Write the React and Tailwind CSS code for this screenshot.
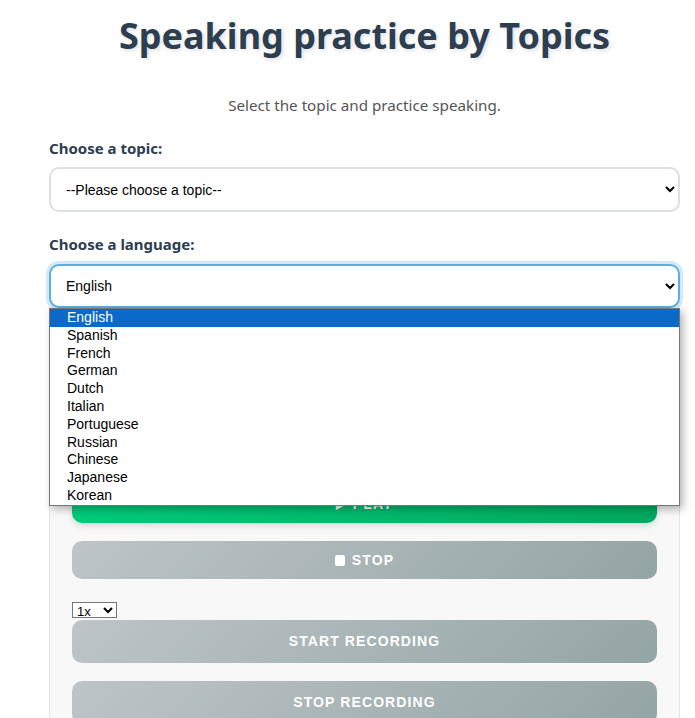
import { useState } from 'react';

const LANGUAGES = ['English', 'Spanish', 'French', 'German', 'Dutch', 'Italian', 'Portuguese', 'Russian', 'Chinese', 'Japanese', 'Korean'];

const grayBtn = 'w-full rounded-[10px] bg-[linear-gradient(135deg,#bec4c8,#94a5a5)] text-white font-bold uppercase tracking-[1.1px] text-[14px] font-["Liberation_Sans",Arial,sans-serif] flex items-center justify-center gap-[7px]';

export default function App() {
  const [lang] = useState('English');

  return (
    <div className='min-h-screen bg-white pl-[49px] pr-[15px] font-["Noto_Sans","Open_Sans",sans-serif] text-[#333]'>
      <h1 className="pt-[12px] text-center text-[36px] leading-[48px] font-bold text-[#2c3e50] [text-shadow:2px_2px_4px_rgba(0,0,0,0.12)]">
        Speaking practice by Topics
      </h1>
      <p className="mt-[34px] text-center text-[15.2px] leading-[22px] text-[#555]">Select the topic and practice speaking.</p>

      <label className="mt-[22px] block text-[15px] leading-[20px] font-bold text-[#2c3e50]">Choose a topic:</label>
      <select className='mt-[9px] block w-full h-[45px] rounded-[10px] border-2 border-[#dcdfe3] bg-white px-[11px] text-[14px] text-black font-["Liberation_Sans",Arial,sans-serif] outline-none'>
        <option>--Please choose a topic--</option>
      </select>

      <label className="mt-[22px] block text-[15px] leading-[20px] font-bold text-[#2c3e50]">Choose a language:</label>
      <div className="relative mt-[10px]">
        <select
          defaultValue={lang}
          className='block w-full h-[44px] rounded-[10px] border-2 border-[#5aaee3] bg-white px-[11px] text-[14px] text-black font-["Liberation_Sans",Arial,sans-serif] outline-none shadow-[0_0_0_3px_rgba(52,152,219,0.22)]'
        >
          {LANGUAGES.map(l => <option key={l}>{l}</option>)}
        </select>
        <ul className='absolute left-0 right-0 top-full z-10 border border-[#767676] bg-white shadow-[3px_3px_8px_rgba(0,0,0,0.3)] font-["Liberation_Sans",Arial,sans-serif] text-[14px] text-black'>
          {LANGUAGES.map(l => (
            <li key={l} className={l === lang ? 'h-[17.8px] leading-[17.8px] pl-[17px] bg-[#0b69c9] text-white' : 'h-[17.8px] leading-[17.8px] pl-[17px]'}>{l}</li>
          ))}
        </ul>
      </div>

      <div className="mt-[22px] rounded-[10px] border border-[#e4e4e4] bg-[#f8f8f8] px-[22px] pt-[22px] pb-[20px]">
        <div className="h-[110px] rounded-[10px] border border-[#e0e0e0] bg-white" />
        <button className='mt-[22px] w-full h-[38px] rounded-[10px] bg-[linear-gradient(135deg,#00cc7c,#00a85e)] shadow-[0_3px_6px_rgba(0,0,0,0.12)] text-white font-bold uppercase tracking-[1.1px] text-[14px] font-["Liberation_Sans",Arial,sans-serif] flex items-center justify-center gap-[7px]'>
          <span className="text-[12px]">▶</span> Play
        </button>
        <button className={`mt-[18px] h-[38px] ${grayBtn}`}>
          <span className="inline-block w-[10px] h-[11px] rounded-[2px] bg-white" /> Stop
        </button>
        <select className='mt-[23px] block h-[16px] w-[45px] border border-[#767676] bg-white text-[13px] leading-[13px] text-black font-["Liberation_Sans",Arial,sans-serif] outline-none'>
          <option>1x</option>
        </select>
        <button className={`mt-[2px] h-[43px] ${grayBtn}`}>Start Recording</button>
        <button className={`mt-[18px] h-[43px] ${grayBtn}`}>Stop Recording</button>
      </div>
    </div>
  );
}
